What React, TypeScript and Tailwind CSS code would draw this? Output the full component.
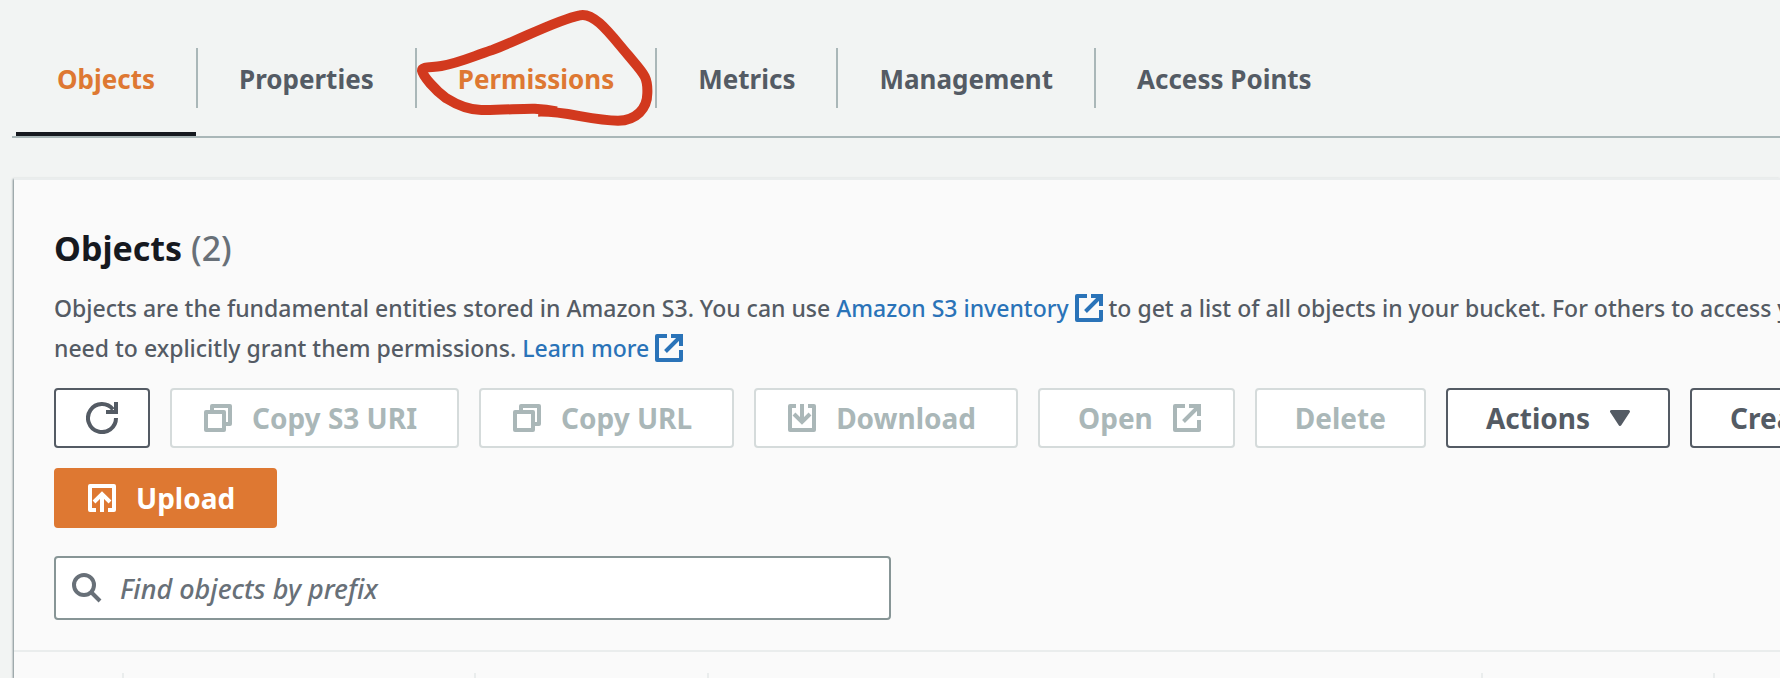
import type { ReactNode } from "react";

function Icon({ className = "size-7", box = 28, children }: { className?: string; box?: number; children: ReactNode }) {
  return (
    <svg aria-hidden="true" viewBox={`0 0 ${box} ${box}`} className={className} fill="none" stroke="currentColor" strokeWidth={4}>
      {children}
    </svg>
  );
}

function ExternalIcon({ className }: { className?: string }) {
  return (
    <Icon className={className}>
      <path d="M12 2H2V26H26V16" strokeLinejoin="round" />
      <path d="M16 2H26V12M26 2L10.500 17.500" />
    </Icon>
  );
}

function CopyIcon() {
  return (
    <Icon>
      <path d="M2 8H20V26H2Z" strokeLinejoin="round" />
      <path d="M8 8V2H26V20H20" strokeLinejoin="round" />
    </Icon>
  );
}

function DownloadIcon() {
  return (
    <Icon>
      <path d="M8 2H2V26H26V2H20" strokeLinejoin="round" />
      <path d="M14 0V17M6 10L14 18L22 10" />
    </Icon>
  );
}

function UploadIcon() {
  return (
    <Icon>
      <path d="M8 26H2V2H26V26H20" strokeLinejoin="round" />
      <path d="M14 28V11M6 18L14 10L22 18" />
    </Icon>
  );
}

function RefreshIcon() {
  return (
    <Icon className="size-8" box={32}>
      <path d="M30 16A14 14 0 1 1 27 7.400" />
      <path d="M30 0V10H20" />
    </Icon>
  );
}

function CaretIcon() {
  return (
    <Icon className="mr-1.5 size-5" box={20}>
      <path d="M1.500 3.500H18.500L10 16.500Z" fill="currentColor" strokeWidth={3} strokeLinejoin="round" />
    </Icon>
  );
}

function SearchIcon() {
  return (
    <Icon className="size-[30px] shrink-0 text-[#687078]" box={30}>
      <circle cx="12" cy="12" r="10" />
      <path d="M19 19L28 28" />
    </Icon>
  );
}

function Button({
  children,
  before,
  after,
  disabled,
  primary,
}: {
  children: ReactNode;
  before?: ReactNode;
  after?: ReactNode;
  disabled?: boolean;
  primary?: boolean;
}) {
  const tone = primary
    ? "border-[#de7832] bg-[#de7832] text-white"
    : disabled
      ? "border-[#d5dbdb] bg-white text-[#aab7b8]"
      : "border-[#545b64] bg-white text-[#545b64]";
  return (
    <button
      type="button"
      disabled={disabled}
      className={`flex h-[60px] shrink-0 items-center gap-5 rounded-[4px] border-2 text-[28px] font-bold whitespace-nowrap ${before ? "pl-8" : "pl-[38px]"} ${after ? "pr-8" : before ? "pr-10" : "pr-[38px]"} ${tone}`}
    >
      {before}
      {children}
      {after}
    </button>
  );
}

function Annotation() {
  return (
    <svg
      aria-hidden="true"
      viewBox="57 24 711 354"
      className="pointer-events-none absolute -top-10 left-0 h-[118px] w-[237px]"
      fill="none"
      stroke="#d2391e"
      strokeWidth={30}
    >
      <path d="M420 335C500 332 580 362 660 362C715 362 748 325 748 280C750 230 738 222 690 165C640 107 590 35 545 46C475 60 370 118 280 151C220 171 180 190 130 198C100 203 72 199 72 212C75 228 110 270 145 295C180 317 210 330 250 330C310 331 370 325 410 326C440 328 460 331 476 334" />
    </svg>
  );
}

const tabs = ["Objects", "Properties", "Permissions", "Metrics", "Management", "Access Points"];

function Tabs() {
  return (
    <nav className="ml-3 border-b-2 border-[#aab7b8] pt-12 pl-1">
      <ul className="flex">
        {tabs.map((tab, i) => (
          <li key={tab} className="flex">
            <div
              className={`relative border-b-4 pb-[22px] ${i === 0 ? "border-[#16191f]" : "border-transparent"}`}
            >
              <a
                href={`#${tab.toLowerCase().replace(" ", "-")}`}
                aria-current={i === 0 ? "page" : undefined}
                className={`block px-[41px] text-[26px] leading-[62px] font-bold whitespace-nowrap ${i === 0 || i === 2 ? "text-[#de7832]" : "text-[#545b64]"}`}
              >
                {tab}
              </a>
              {tab === "Permissions" && <Annotation />}
            </div>
            {i < tabs.length - 1 && <span className="h-[60px] w-0.5 bg-[#aab7b8]" />}
          </li>
        ))}
      </ul>
    </nav>
  );
}

function TextLink({ children }: { children: ReactNode }) {
  return (
    <a href="#docs" className="text-[#2a73b8]">
      {children}
      <ExternalIcon className="ml-1.5 inline size-7 align-[-5px]" />
    </a>
  );
}

export default function App() {
  return (
    <main className="min-h-screen overflow-hidden bg-[#f2f4f3] font-['Noto_Sans',sans-serif] text-[#545b64]">
      <Tabs />
      <section className="mt-10 ml-3.5 border-t-2 border-[#eaeded] bg-[#fafafa] shadow-[-1px_1px_2px_0_rgba(0,28,36,0.5)]">
        <div className="pt-10 pr-[52px] pb-[30px] pl-10">
          <h1 className="text-[34px] leading-[56px] font-bold text-[#16191f]">
            Objects <span className="font-medium text-[#687078]">(2)</span>
          </h1>
          <p className="mt-3 text-[23px] leading-10 font-medium whitespace-nowrap">
            Objects are the fundamental entities stored in Amazon S3. You can use{" "}
            <TextLink>Amazon S3 inventory</TextLink> to get a list of all objects in your bucket. For others to access your
            <br />
            need to explicitly grant them permissions. <TextLink>Learn more</TextLink>
          </p>
          <div className="mt-5 flex gap-5">
            <button
              type="button"
              aria-label="Refresh"
              className="flex h-[60px] w-24 shrink-0 items-center justify-center rounded-[4px] border-2 border-[#545b64] bg-white"
            >
              <RefreshIcon />
            </button>
            <Button disabled before={<CopyIcon />}>Copy S3 URI</Button>
            <Button disabled before={<CopyIcon />}>Copy URL</Button>
            <Button disabled before={<DownloadIcon />}>Download</Button>
            <Button disabled after={<ExternalIcon />}>Open</Button>
            <Button disabled>Delete</Button>
            <Button after={<CaretIcon />}>Actions</Button>
            <Button>Create folder</Button>
          </div>
          <div className="mt-5 flex">
            <Button primary before={<UploadIcon />}>Upload</Button>
          </div>
          <label className="mt-7 flex h-16 w-1/2 items-center gap-[18px] rounded-[4px] border-2 border-[#879596] bg-white pl-4">
            <SearchIcon />
            <input
              type="text"
              aria-label="Find objects by prefix"
              placeholder="Find objects by prefix"
              className="min-w-0 flex-1 pt-0.5 text-[27px] font-medium italic outline-none placeholder:text-[#687078]"
            />
          </label>
        </div>
        <div className="grid grid-cols-[108px_352px_233px_774px_232px_1fr] border-t-2 border-[#eaeded] pt-[21px]">
          <span className="h-[5px]" />
          <span className="h-[5px] border-l-2 border-[#eaeded]" />
          <span className="h-[5px] border-l-2 border-[#eaeded]" />
          <span className="h-[5px] border-l-2 border-[#eaeded]" />
          <span className="h-[5px] border-l-2 border-[#eaeded]" />
          <span className="h-[5px] border-l-2 border-[#eaeded]" />
        </div>
      </section>
    </main>
  );
}
